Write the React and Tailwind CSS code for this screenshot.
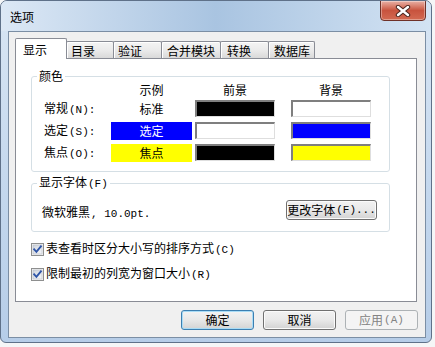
import React from "react";

const FONT = { fontFamily: '"Noto Sans CJK SC", "Noto Sans", sans-serif' };
const MONO = { fontFamily: '"Liberation Mono", "DejaVu Sans Mono", monospace' };

function A({ children }) {
  return (
    <span className="text-[11px] ml-[1px]" style={MONO}>
      {children}
    </span>
  );
}

function Tab({ label, selected, w, pl, first }) {
  if (selected) {
    return (
      <div
        className={`relative z-10 h-[21px] -mb-px bg-white border border-b-0 border-[#898c95] rounded-t-[2px] text-[12px] leading-[14px] text-black pt-[4px] ${first ? "" : "-ml-px"}`}
        style={{ width: w, paddingLeft: pl }}
      >
        {label}
      </div>
    );
  }
  return (
    <div
      className="h-[17px] -ml-px border border-b-0 border-[#898c95] rounded-t-[2px] bg-linear-to-b from-[#f4f4f4] via-[#ebebeb] to-[#d9d9d9] text-[12px] leading-[14px] text-black pt-[2px] shadow-[inset_1px_1px_0_#ffffff]"
      style={{ width: w, paddingLeft: pl }}
    >
      {label}
    </div>
  );
}

function Swatch({ color }) {
  return (
    <div
      className="w-[80px] h-[17px] border-t-2 border-l-2 border-t-[#7f7f7f] border-l-[#7f7f7f] border-r border-b border-r-[#dedede] border-b-[#dedede]"
      style={{ backgroundColor: color }}
    />
  );
}

function Check() {
  return (
    <svg width="13" height="13" viewBox="0 0 13 13" className="shrink-0">
      <defs>
        <linearGradient id="cbg" x1="0" y1="0" x2="1" y2="1">
          <stop offset="0" stopColor="#cdd3dc" />
          <stop offset="1" stopColor="#f7f8fa" />
        </linearGradient>
      </defs>
      <rect x="0.5" y="0.5" width="12" height="12" fill="#f4f4f4" stroke="#8e8f8f" />
      <rect x="2" y="2" width="9" height="9" fill="url(#cbg)" stroke="#b4bac3" strokeWidth="0.6" />
      <path d="M3.2 6.4 L5.4 8.8 L9.9 3.4" fill="none" stroke="#2e55a8" strokeWidth="1.9" strokeLinecap="square" />
    </svg>
  );
}

function Button({ children, variant = "normal", className = "" }) {
  const base =
    "h-[20px] rounded-[3px] flex items-center justify-center text-[12px] leading-[14px] whitespace-nowrap";
  if (variant === "disabled") {
    return (
      <div className={`${base} border border-[#adb2b5] bg-[#f4f4f4] text-[#838383] ${className}`}>
        {children}
      </div>
    );
  }
  if (variant === "default") {
    return (
      <div
        className={`${base} border border-[#3c7fb1] bg-linear-to-b from-[#f3f3f3] via-[#e8e8e8] to-[#d4d4d4] text-black shadow-[inset_0_0_0_1px_#a9dcf6] ${className}`}
      >
        {children}
      </div>
    );
  }
  return (
    <div
      className={`${base} border border-[#707070] bg-linear-to-b from-[#f2f2f2] via-[#e9e9e9] to-[#d2d2d2] text-black shadow-[inset_0_0_0_1px_#fbfbfb] ${className}`}
    >
      {children}
    </div>
  );
}

export default function App() {
  return (
    <div className="w-[435px] h-[347px] bg-[#f5f6f7] overflow-hidden" style={FONT}>
      <div className="w-[432px] h-[343px] border border-[#5f7189] rounded-t-[7px] rounded-b-[6px] bg-linear-to-b from-[#d9e6f4] via-[#c6d9ee] to-[#b6cde8] flex flex-col overflow-hidden">
        {/* Title bar */}
        <div className="h-[30px] shrink-0 flex items-start justify-between bg-linear-to-r from-[#dce8f5] via-[#a9c4e1] to-[#d3e3f3]">
          <div className="pl-[9px] pt-[9px] text-[12px] leading-[14px] text-black">选项</div>
          <div className="-mt-px mr-[5px] w-[46px] h-[21px] rounded-b-[4px] border border-[#6e3128] bg-linear-to-b from-[#e8b1a6] via-[#c8533e] to-[#d36a52] flex items-center justify-center shadow-[inset_0_0_0_1px_rgba(255,255,255,0.35)]">
            <svg width="16" height="12" viewBox="0 0 16 12">
              <path d="M3 2 L13 10 M13 2 L3 10" stroke="#4a2620" strokeWidth="4.4" strokeLinecap="round" />
              <path d="M3 2 L13 10 M13 2 L3 10" stroke="#ffffff" strokeWidth="2.4" strokeLinecap="round" />
            </svg>
          </div>
        </div>

        {/* Client area */}
        <div className="ml-[7px] w-[418px] h-[307px] shrink-0 border border-[#7b8ea4] bg-[#f0f0f0] flex flex-col px-[6px] pt-[6px]">
          {/* Tab strip */}
          <div className="h-[20px] flex items-end">
            <Tab label="显示" selected w={52} pl={7} first />
            <Tab label="目录" w={48} pl={4} />
            <Tab label="验证" w={49} pl={4} />
            <Tab label="合并模块" w={60} pl={5} />
            <Tab label="转换" w={49} pl={6} />
            <Tab label="数据库" w={47} pl={5} />
          </div>

          {/* Panel */}
          <div className="w-[402px] h-[244px] border border-[#898c95] bg-white flex flex-col">
            {/* 颜色 group */}
            <fieldset className="ml-[15px] mt-[10px] w-[359px] border border-[#d5dfe5] rounded-[3px] p-0">
              <legend className="ml-[5px] px-[2px] text-[12px] leading-[14px] text-black">颜色</legend>
              <div className="pl-[12px] pb-[10px] text-[12px] leading-[14px] text-black">
                <div className="flex h-[14px]">
                  <div className="w-[67px]" />
                  <div className="w-[81px] text-center">示例</div>
                  <div className="ml-[3px] w-[80px] text-center">前景</div>
                  <div className="ml-[16px] w-[80px] text-center">背景</div>
                </div>
                <div className="flex items-center h-[17px] mt-[3px]">
                  <div className="w-[67px]">常规<A>(N):</A></div>
                  <div className="w-[81px] h-[17px] flex items-center justify-center">标准</div>
                  <div className="ml-[3px]"><Swatch color="#000000" /></div>
                  <div className="ml-[16px]"><Swatch color="#ffffff" /></div>
                </div>
                <div className="flex items-center h-[17px] mt-[5px]">
                  <div className="w-[67px]">选定<A>(S):</A></div>
                  <div className="w-[81px] h-[18px] bg-[#0000ff] text-white flex items-center justify-center">选定</div>
                  <div className="ml-[3px]"><Swatch color="#ffffff" /></div>
                  <div className="ml-[16px]"><Swatch color="#0000ff" /></div>
                </div>
                <div className="flex items-center h-[17px] mt-[5px]">
                  <div className="w-[67px]">焦点<A>(O):</A></div>
                  <div className="w-[81px] h-[18px] bg-[#ffff00] text-black flex items-center justify-center">焦点</div>
                  <div className="ml-[3px]"><Swatch color="#000000" /></div>
                  <div className="ml-[16px]"><Swatch color="#ffff00" /></div>
                </div>
              </div>
            </fieldset>

            {/* 显示字体 group */}
            <fieldset className="ml-[15px] mt-[3px] w-[359px] border border-[#d5dfe5] rounded-[3px] p-0">
              <legend className="ml-[5px] px-[2px] text-[12px] leading-[14px] text-black">显示字体<A>(F)</A></legend>
              <div className="pl-[10px] pr-[12px] pt-[7px] pb-[10px] flex items-center justify-between text-[12px] leading-[14px] text-black">
                <div className="mt-[7px]">微软雅黑<A>, 10.0pt.</A></div>
                <Button className="w-[91px] h-[20px]">更改字体<A>(F)...</A></Button>
              </div>
            </fieldset>

            {/* Checkboxes */}
            <div className="ml-[15px] mt-[10px] h-[14px] flex items-center gap-[2px] text-[12px] leading-[14px] text-black">
              <Check />
              <span>表查看时区分大小写的排序方式<A>(C)</A></span>
            </div>
            <div className="ml-[15px] mt-[11px] h-[14px] flex items-center gap-[2px] text-[12px] leading-[14px] text-black">
              <Check />
              <span>限制最初的列宽为窗口大小<A>(R)</A></span>
            </div>
          </div>

          {/* Buttons */}
          <div className="mt-[8px] flex justify-end gap-[9px] pr-[1px]">
            <Button variant="default" className="w-[73px]">确定</Button>
            <Button className="w-[73px]">取消</Button>
            <Button variant="disabled" className="w-[73px]">应用<A>(A)</A></Button>
          </div>
        </div>
      </div>
    </div>
  );
}
